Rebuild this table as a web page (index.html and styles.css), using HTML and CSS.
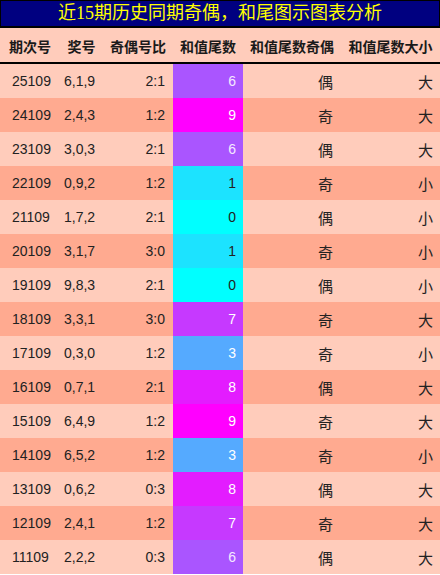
FILE: index.html
```html
<!DOCTYPE html>
<html lang="zh">
<head>
<meta charset="utf-8">
<title>近15期历史同期奇偶，和尾图示图表分析</title>
<link rel="stylesheet" href="styles.css">
</head>
<body>
<div class="page">
  <div class="title">近15期历史同期奇偶，和尾图示图表分析</div>
  <div class="table">
    <div class="row head">
      <div class="c c1">期次号</div>
      <div class="c c2">奖号</div>
      <div class="c c3">奇偶号比</div>
      <div class="c c4">和值尾数</div>
      <div class="c c5">和值尾数奇偶</div>
      <div class="c c6">和值尾数大小</div>
    </div>
    <div class="row light"><div class="c c1">25109</div><div class="c c2">6,1,9</div><div class="c c3">2:1</div><div class="c c4 v6">6</div><div class="c c5">偶</div><div class="c c6">大</div></div>
    <div class="row dark"><div class="c c1">24109</div><div class="c c2">2,4,3</div><div class="c c3">1:2</div><div class="c c4 v9">9</div><div class="c c5">奇</div><div class="c c6">大</div></div>
    <div class="row light"><div class="c c1">23109</div><div class="c c2">3,0,3</div><div class="c c3">2:1</div><div class="c c4 v6">6</div><div class="c c5">偶</div><div class="c c6">大</div></div>
    <div class="row dark"><div class="c c1">22109</div><div class="c c2">0,9,2</div><div class="c c3">1:2</div><div class="c c4 v1">1</div><div class="c c5">奇</div><div class="c c6">小</div></div>
    <div class="row light"><div class="c c1">21109</div><div class="c c2">1,7,2</div><div class="c c3">2:1</div><div class="c c4 v0">0</div><div class="c c5">偶</div><div class="c c6">小</div></div>
    <div class="row dark"><div class="c c1">20109</div><div class="c c2">3,1,7</div><div class="c c3">3:0</div><div class="c c4 v1">1</div><div class="c c5">奇</div><div class="c c6">小</div></div>
    <div class="row light"><div class="c c1">19109</div><div class="c c2">9,8,3</div><div class="c c3">2:1</div><div class="c c4 v0">0</div><div class="c c5">偶</div><div class="c c6">小</div></div>
    <div class="row dark"><div class="c c1">18109</div><div class="c c2">3,3,1</div><div class="c c3">3:0</div><div class="c c4 v7">7</div><div class="c c5">奇</div><div class="c c6">大</div></div>
    <div class="row light"><div class="c c1">17109</div><div class="c c2">0,3,0</div><div class="c c3">1:2</div><div class="c c4 v3">3</div><div class="c c5">奇</div><div class="c c6">小</div></div>
    <div class="row dark"><div class="c c1">16109</div><div class="c c2">0,7,1</div><div class="c c3">2:1</div><div class="c c4 v8">8</div><div class="c c5">偶</div><div class="c c6">大</div></div>
    <div class="row light"><div class="c c1">15109</div><div class="c c2">6,4,9</div><div class="c c3">1:2</div><div class="c c4 v9">9</div><div class="c c5">奇</div><div class="c c6">大</div></div>
    <div class="row dark"><div class="c c1">14109</div><div class="c c2">6,5,2</div><div class="c c3">1:2</div><div class="c c4 v3">3</div><div class="c c5">奇</div><div class="c c6">小</div></div>
    <div class="row light"><div class="c c1">13109</div><div class="c c2">0,6,2</div><div class="c c3">0:3</div><div class="c c4 v8">8</div><div class="c c5">偶</div><div class="c c6">大</div></div>
    <div class="row dark"><div class="c c1">12109</div><div class="c c2">2,4,1</div><div class="c c3">1:2</div><div class="c c4 v7">7</div><div class="c c5">奇</div><div class="c c6">大</div></div>
    <div class="row light"><div class="c c1">11109</div><div class="c c2">2,2,2</div><div class="c c3">0:3</div><div class="c c4 v6">6</div><div class="c c5">偶</div><div class="c c6">大</div></div>
  </div>
</div>
</body>
</html>
```

FILE: styles.css
```css
html, body {
  margin: 0;
  padding: 0;
  background: #ffffff;
}

.page {
  width: 440px;
  font-family: "Liberation Sans", "Noto Sans CJK SC", sans-serif;
}

.title {
  box-sizing: border-box;
  height: 28px;
  border: 1px solid #000000;
  border-bottom-width: 2px;
  background: #000080;
  color: #ffff00;
  font-family: "Liberation Serif", "Noto Sans CJK SC", serif;
  font-size: 18px;
  line-height: 24px;
  text-align: center;
}

.table {
  display: flex;
  flex-direction: column;
}

.row {
  display: grid;
  grid-template-columns: 60px 43px 70px 70px 98px 99px;
  height: 34px;
  box-sizing: border-box;
}

.c {
  display: flex;
  align-items: center;
  font-size: 14px;
  color: #222222;
  white-space: nowrap;
}

.head {
  background: #ffccbb;
  border-bottom: 2px solid #000000;
  height: 36px;
}

.head .c {
  justify-content: center;
  font-weight: bold;
  font-family: "Noto Sans CJK SC", sans-serif;
  font-size: 14px;
  color: #1a1a1a;
  padding-top: 1px;
}

.light { background: #ffccbb; }
.dark { background: #ffaa90; }

.row .c1 { padding-left: 12px; }
.row .c2 { padding-left: 4px; }
.row .c3 { justify-content: flex-end; padding-right: 8px; }
.row .c4 { justify-content: flex-end; padding-right: 7px; }
.row .c5 { justify-content: flex-end; padding-right: 8px; font-family: "Noto Sans CJK SC", sans-serif; font-size: 15px; }
.row .c6 { justify-content: flex-end; padding-right: 7px; font-family: "Noto Sans CJK SC", sans-serif; font-size: 15px; }

.head .c1, .head .c2, .head .c3, .head .c4, .head .c5, .head .c6 {
  padding-left: 0;
  padding-right: 0;
  justify-content: center;
  font-size: 14px;
}

.v0 { background: #00ffff; color: #222222; }
.v1 { background: #1ce3ff; color: #222222; }
.v3 { background: #55aaff; color: #ffffff; }
.v6 { background: #aa55ff; color: #f4eaff; }
.v7 { background: #c639ff; color: #ffffff; }
.v8 { background: #e31cff; color: #ffffff; }
.v9 { background: #ff00ff; color: #ffffff; }
```
